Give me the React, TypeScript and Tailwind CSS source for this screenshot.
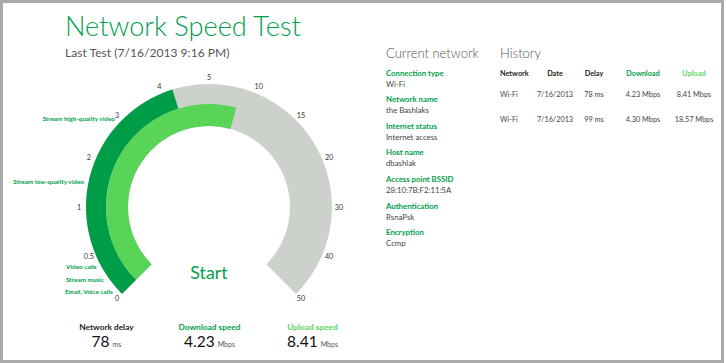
import React from "react";

const CX = 209;
const CY = 207;
const TICKS = [0, 0.5, 1, 2, 3, 4, 5, 10, 15, 20, 30, 40, 50];
const FONT = "Lato, sans-serif";

function valueToAngle(v: number): number {
  for (let i = 0; i < TICKS.length - 1; i++) {
    if (v >= TICKS[i] && v <= TICKS[i + 1]) {
      const t = (v - TICKS[i]) / (TICKS[i + 1] - TICKS[i]);
      return -135 + (i + t) * 22.5;
    }
  }
  return 135;
}

function pt(r: number, deg: number): [number, number] {
  const a = (deg * Math.PI) / 180;
  return [CX + r * Math.sin(a), CY - r * Math.cos(a)];
}

function sector(r1: number, r2: number, a0: number, a1: number): string {
  const large = a1 - a0 > 180 ? 1 : 0;
  const [x0, y0] = pt(r2, a0);
  const [x1, y1] = pt(r2, a1);
  const [x2, y2] = pt(r1, a1);
  const [x3, y3] = pt(r1, a0);
  return `M${x0} ${y0} A${r2} ${r2} 0 ${large} 1 ${x1} ${y1} L${x2} ${y2} A${r1} ${r1} 0 ${large} 0 ${x3} ${y3} Z`;
}

const GREEN = "#00a04b";
const LIGHT = "#58d457";

function Gauge() {
  const dl = valueToAngle(4.23);
  const ul = valueToAngle(8.41);
  const annFont = { fontFamily: FONT, fontSize: 6.4, fontWeight: 700 };
  return (
    <svg width={383} height={245} viewBox="3 65 383 245" className="block">
      <path d={sector(81, 123, -135, 135)} fill="#ccd1cb" />
      <path d={sector(103, 123, -135, dl)} fill="#009d48" />
      <path d={sector(81, 103, -135, ul)} fill={LIGHT} />
      {TICKS.map((v, i) => {
        const [x, y] = pt(130, -135 + i * 22.5);
        return (
          <text
            key={v}
            x={x}
            y={y}
            textAnchor="middle"
            dominantBaseline="central"
            fill="#333"
            style={{ fontFamily: FONT, fontSize: 7.2 }}
          >
            {v}
          </text>
        );
      })}
      <text x={115} y={118} textAnchor="end" dominantBaseline="central" fill={GREEN} style={annFont}>
        Stream high-quality video
      </text>
      <text x={84} y={181} textAnchor="end" dominantBaseline="central" fill={GREEN} style={annFont}>
        Stream low-quality video
      </text>
      <text x={66} y={266} dominantBaseline="central" fill={GREEN} style={annFont}>
        Video calls
      </text>
      <text x={66} y={279} dominantBaseline="central" fill={GREEN} style={annFont}>
        Stream music
      </text>
      <text x={65} y={291} dominantBaseline="central" fill={GREEN} style={annFont}>
        Email, Voice calls
      </text>
      <text
        x={CX}
        y={272}
        textAnchor="middle"
        dominantBaseline="central"
        fill={GREEN}
        style={{ fontFamily: FONT, fontSize: 17.8 }}
      >
        Start
      </text>
    </svg>
  );
}

function Stat({ label, color, value, unit }: { label: string; color: string; value: string; unit: string }) {
  return (
    <div className="w-[103px] flex flex-col items-center">
      <div className={`text-[8.3px] leading-[11px] font-bold ${color}`}>{label}</div>
      <div className="flex items-baseline mt-[-2px] leading-[20px]">
        <span className="text-[15.5px] text-[#111]">{value}</span>
        <span className="text-[7px] text-[#555] ml-[3px]">{unit}</span>
      </div>
    </div>
  );
}

const fields: [string, string][] = [
  ["Connection type", "Wi-Fi"],
  ["Network name", "the Bashlaks"],
  ["Internet status", "Internet access"],
  ["Host name", "dbashlak"],
  ["Access point BSSID", "28:10:7B:F2:11:5A"],
  ["Authentication", "RsnaPsk"],
  ["Encryption", "Ccmp"],
];

const rows = [
  ["Wi-Fi", "7/16/2013", "78 ms", "4.23 Mbps", "8.41 Mbps"],
  ["Wi-Fi", "7/16/2013", "99 ms", "4.30 Mbps", "18.57 Mbps"],
];

function Row({ cells, className, colors }: { cells: string[]; className: string; colors?: string[] }) {
  const widths = ["w-[32px] justify-start", "w-[46px] justify-center", "w-[32px] justify-center", "w-[66px] justify-center", "w-[36px] justify-center"];
  return (
    <div className={`flex h-[11px] leading-[11px] text-[7.3px] ${className}`}>
      {cells.map((c, i) => (
        <div key={i} className={`flex whitespace-nowrap ${widths[i]} ${colors ? colors[i] : "text-[#444]"}`}>
          {c}
        </div>
      ))}
    </div>
  );
}

export default function App() {
  return (
    <div className="w-[726px] h-[363px] bg-white font-['Lato',sans-serif]">
      <div className="w-[724px] h-[363px] border-[3px] border-[#aaaaaa] flex overflow-hidden">
        <div className="w-[383px] shrink-0 flex flex-col">
          <div className="h-[62px] pl-[62px]">
            <div className="mt-[9px] text-[27.2px] leading-[27px] font-light text-[#00a04b] whitespace-nowrap">
              Network Speed Test
            </div>
            <div className="mt-[6px] text-[12.1px] leading-[16px] text-[#555] whitespace-nowrap">
              Last Test (7/16/2013 9:16 PM)
            </div>
          </div>
          <Gauge />
          <div className="flex pl-[52px] pt-[12px]">
            <Stat label="Network delay" color="text-[#222]" value="78" unit="ms" />
            <Stat label="Download speed" color="text-[#00a04b]" value="4.23" unit="Mbps" />
            <Stat label="Upload speed" color="text-[#5cd65c]" value="8.41" unit="Mbps" />
          </div>
        </div>
        <div className="w-[114px] shrink-0 pt-[40px]">
          <div className="text-[13px] leading-[20px] font-light text-[#555] whitespace-nowrap">Current network</div>
          <div className="mt-[4.5px] flex flex-col gap-[4.67px]">
            {fields.map(([k, v]) => (
              <div key={k} className="text-[7.8px] leading-[11px] whitespace-nowrap">
                <div className="font-bold text-[#00a04b]">{k}</div>
                <div className="text-[#444]">{v}</div>
              </div>
            ))}
          </div>
        </div>
        <div className="flex-1 pt-[40px]">
          <div className="text-[13px] leading-[20px] font-light text-[#555]">History</div>
          <Row
            className="mt-[4.5px] font-bold"
            cells={["Network", "Date", "Delay", "Download", "Upload"]}
            colors={["text-[#222]", "text-[#222]", "text-[#222]", "text-[#00a04b]", "text-[#5cd65c]"]}
          />
          <Row className="mt-[10px]" cells={rows[0]} />
          <Row className="mt-[14px]" cells={rows[1]} />
        </div>
      </div>
    </div>
  );
}
